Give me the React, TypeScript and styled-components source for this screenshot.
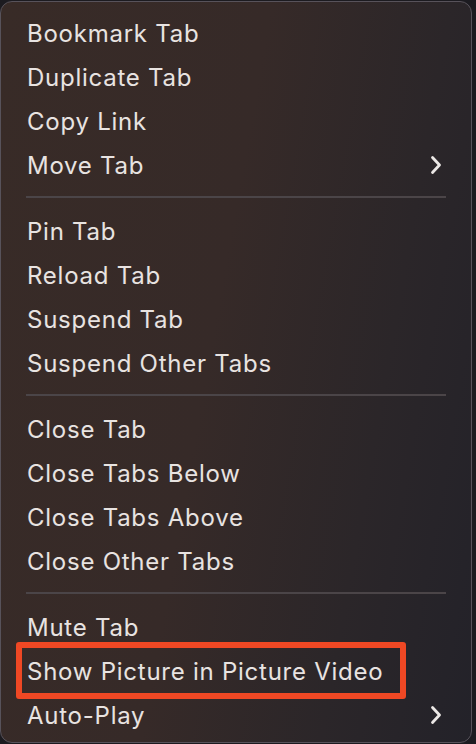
import React from "react";
import styled, {createGlobalStyle} from "styled-components";

const GlobalStyle = createGlobalStyle`
	html, body {
		margin: 0;
		padding: 0;
		background: #1c1b20;
	}
	body {
		font-family: Inter, "Open Sans", sans-serif;
		-webkit-font-smoothing: antialiased;
	}
`;

type Item = {label: string; sub?: boolean; marked?: boolean};

const groups: Item[][] = [
	[{label: "Bookmark Tab"}, {label: "Duplicate Tab"}, {label: "Copy Link"}, {label: "Move Tab", sub: true}],
	[{label: "Pin Tab"}, {label: "Reload Tab"}, {label: "Suspend Tab"}, {label: "Suspend Other Tabs"}],
	[{label: "Close Tab"}, {label: "Close Tabs Below"}, {label: "Close Tabs Above"}, {label: "Close Other Tabs"}],
	[{label: "Mute Tab"}, {label: "Show Picture in Picture Video", marked: true}, {label: "Auto-Play", sub: true}],
];

const Chevron = () => (
	<svg width="14" height="20" viewBox="0 0 14 20" fill="none">
		<path d="M3.5 2.5 L10.5 10 L3.5 17.5" stroke="#ece8e6" strokeWidth="2.8" strokeLinecap="round" strokeLinejoin="round" />
	</svg>
);

export default function App() {
	return (
		<>
			<GlobalStyle />
			<Page>
				<Menu>
					{groups.map((group, gi) => (
						<React.Fragment key={gi}>
							{gi > 0 && <Separator />}
							{group.map((item) => (
								<Row key={item.label}>
									<Label>{item.label}</Label>
									{item.sub && <Chevron />}
									{item.marked && <Highlight />}
								</Row>
							))}
						</React.Fragment>
					))}
				</Menu>
			</Page>
		</>
	);
}

const Page = styled.div`
	width: 476px;
	height: 744px;
	padding-top: 1px;
	box-sizing: border-box;
	overflow: hidden;
`;

const Menu = styled.div`
	width: 472px;
	height: 742px;
	box-sizing: border-box;
	padding: 9px 0 0;
	border: 1px solid #57525a;
	border-radius: 12px;
	background: linear-gradient(100deg, #382b27 0%, #362a28 45%, #2b2629 75%, #232229 100%);
`;

const Row = styled.div`
	position: relative;
	height: 44px;
	display: flex;
	align-items: center;
	justify-content: space-between;
	padding: 0 28px 0 26px;
`;

const Label = styled.span`
	font-size: 24px;
	color: #e8e3e1;
	letter-spacing: 0.75px;
`;

const Separator = styled.div`
	height: 2px;
	margin: 9px 25px 11px 25px;
	background: #4b4548;
`;

const Highlight = styled.span`
	position: absolute;
	left: 15px;
	top: -7px;
	width: 390px;
	height: 57px;
	box-sizing: border-box;
	border: 6px solid #ef4824;
	border-radius: 3px;
`;
